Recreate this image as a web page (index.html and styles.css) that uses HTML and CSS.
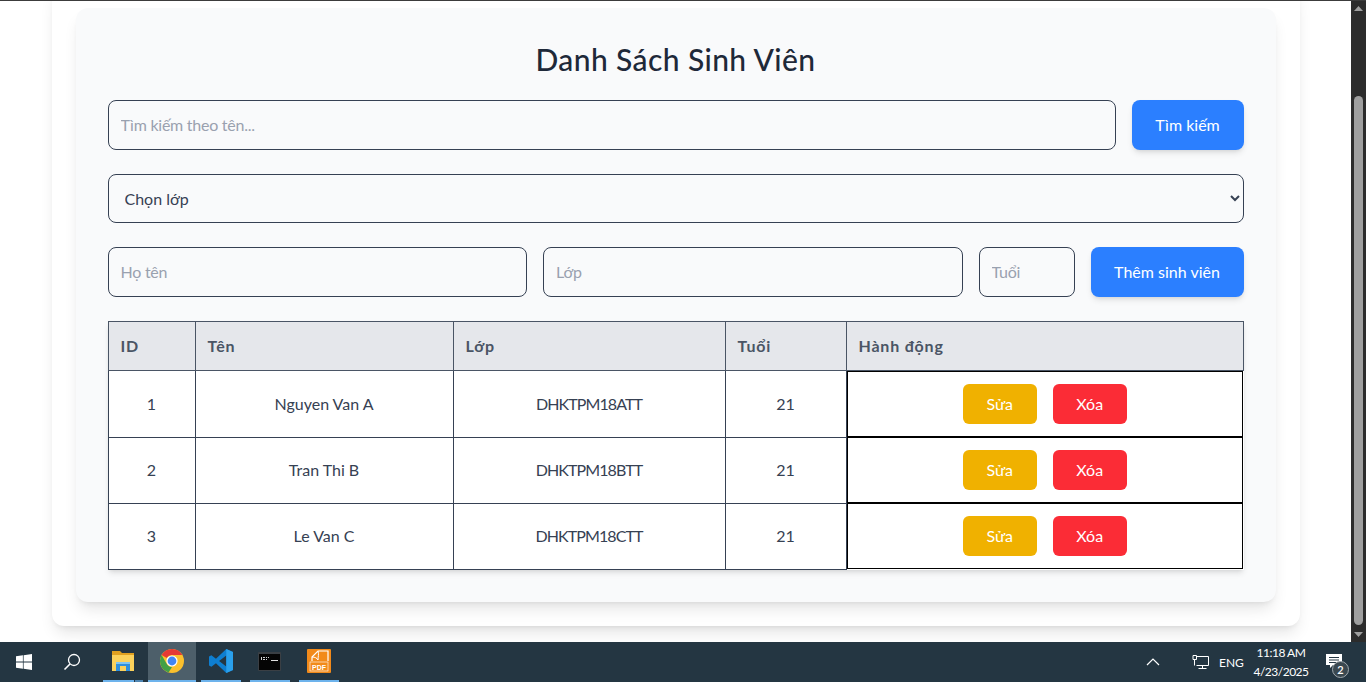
FILE: index.html
```html
<!DOCTYPE html>
<html lang="vi">
<head>
<meta charset="utf-8">
<title>Danh Sách Sinh Viên</title>
<link rel="stylesheet" href="styles.css">
</head>
<body>
<div class="topline"></div>
<div class="screen">
  <main class="viewport">
    <div class="outer">
      <section class="panel">
        <h1 class="title">Danh Sách Sinh Viên</h1>
        <form class="row">
          <input class="field grow" placeholder="Tìm kiếm theo tên...">
          <button type="button" class="primary search">Tìm kiếm</button>
        </form>
        <select class="picker"><option>Chọn lớp</option></select>
        <form class="row">
          <input class="field grow" placeholder="Họ tên">
          <input class="field grow" placeholder="Lớp">
          <input class="field age" placeholder="Tuổi">
          <button type="button" class="primary add">Thêm sinh viên</button>
        </form>
        <table class="students">
          <colgroup><col class="c1"><col class="c2"><col class="c3"><col class="c4"><col class="c5"></colgroup>
          <thead>
            <tr><th>ID</th><th>Tên</th><th>Lớp</th><th>Tuổi</th><th>Hành động</th></tr>
          </thead>
          <tbody>
            <tr><td>1</td><td>Nguyen Van A</td><td class="code">DHKTPM18ATT</td><td>21</td><td class="actions"><button class="act edit">Sửa</button><button class="act del">Xóa</button></td></tr>
            <tr><td>2</td><td>Tran Thi B</td><td class="code">DHKTPM18BTT</td><td>21</td><td class="actions"><button class="act edit">Sửa</button><button class="act del">Xóa</button></td></tr>
            <tr><td>3</td><td>Le Van C</td><td class="code">DHKTPM18CTT</td><td>21</td><td class="actions"><button class="act edit">Sửa</button><button class="act del">Xóa</button></td></tr>
          </tbody>
        </table>
      </section>
    </div>
  </main>
  <aside class="scrollbar">
    <svg class="arrow" width="15" height="17" viewBox="0 0 15 17"><path d="M3 10 L7.500 5 L12 10 Z" fill="#9f9f9f"/></svg>
    <div class="gutter"><div class="thumb"></div></div>
    <svg class="arrow" width="15" height="17" viewBox="0 0 15 17"><path d="M3 7 L12 7 L7.500 12 Z" fill="#9f9f9f"/></svg>
  </aside>
</div>
<footer class="taskbar">
  <div class="sysbtn">
    <svg width="16" height="16" viewBox="0 0 16 16"><path fill="#fff" d="M0 2.300 6.900 1.300V7.600H0ZM7.600 1.200 16 0V7.600H7.600ZM0 8.400H6.900V14.700L0 13.700ZM7.600 8.400H16V16L7.600 14.800Z"/></svg>
  </div>
  <div class="sysbtn">
    <svg width="18" height="18" viewBox="0 0 18 18"><circle cx="11" cy="7" r="5.500" fill="none" stroke="#fff" stroke-width="1.300"/><path d="M7 11 L1.500 16.500" stroke="#fff" stroke-width="1.600" fill="none"/></svg>
  </div>
  <div class="tasks">
    <div class="task">
      <div class="icon">
        <svg width="22" height="20" viewBox="0 0 22 20"><path fill="#e0a020" d="M0 0h8l2 2h12v6H0z"/><path fill="#fbd15b" d="M0 4h22v16H0z"/><path fill="#2f8fdc" d="M4 11h14v9h-4v-5H8v5H4z"/><path fill="#7fc4f2" d="M4 11h14v2H4z"/></svg>
      </div>
      <div class="bar stacked"></div>
    </div>
    <div class="task active">
      <div class="icon">
        <svg width="24" height="24" viewBox="0 0 24 24"><circle cx="12" cy="12" r="12" fill="#fbc02d"/><path fill="#e53935" d="M12 0A12 12 0 0 1 22.400 6H12A6 6 0 0 0 6.800 9L1.600 6A12 12 0 0 1 12 0Z"/><path fill="#43a047" d="M1.600 6 6.800 15A6 6 0 0 0 12 18L8.600 23.500A12 12 0 0 1 1.600 6Z"/><circle cx="12" cy="12" r="5.600" fill="#fff"/><circle cx="12" cy="12" r="4.400" fill="#4285f4"/></svg>
      </div>
      <div class="bar"></div>
    </div>
    <div class="task">
      <div class="icon">
        <svg width="24" height="24" viewBox="0 0 100 100"><path fill="#0e7ed0" d="M72 0 29 41 10 26 0 31V69L10 74 29 59 72 100 100 88V12ZM72 27V73L42 50Z" fill-rule="evenodd"/><path fill="#2aa0ec" d="M72 0 100 12V88L72 100V73 27Z"/></svg>
      </div>
      <div class="bar"></div>
    </div>
    <div class="task">
      <div class="icon">
        <svg width="23" height="19" viewBox="0 0 23 19"><rect width="23" height="19" rx="1" fill="#3a3f44"/><rect x="1" y="2" width="21" height="16" fill="#050505"/><path d="M3 5h1v3H3zM5 5h2v1H5zM5 7h2v1H5zM8 5h1v1H8zM8 7h1v1H8zM10 5h1v1h-1z" fill="#d0d0d0"/><path d="M13 8h7v1h-7z" fill="#e0e0e0"/></svg>
      </div>
      <div class="bar"></div>
    </div>
    <div class="task">
      <div class="icon">
        <svg width="24" height="24" viewBox="0 0 24 24"><rect width="24" height="24" rx="1" fill="#f28a1a"/><path d="M5 12V8L11 2H21V12" fill="none" stroke="#fff" stroke-width="1.200"/><path d="M5 8c3 0 5 1 6 3 0-3 1-6 0-9" fill="none" stroke="#fff" stroke-width="1"/><rect x="3" y="13" width="18" height="9" fill="none" stroke="#fff" stroke-width=".6"/><text x="12" y="21" class="pdf">PDF</text></svg>
      </div>
      <div class="bar"></div>
    </div>
  </div>
  <div class="tray">
    <svg class="chev" width="14" height="8" viewBox="0 0 14 8"><path d="M1 7 7 1 13 7" fill="none" stroke="#fff" stroke-width="1.200"/></svg>
    <svg class="net" width="17" height="14" viewBox="0 0 17 14"><path fill="none" stroke="#fff" d="M4.500 1.500H16.500V10.500H4.500M10.500 10.500V13M6.500 13.500H14.500M1 .5H4.500V4.500H1ZM2.500 4.500V10.500"/></svg>
    <span class="lang">ENG</span>
    <div class="clock"><span>11:18 AM</span><span>4/23/2025</span></div>
    <div class="notify">
      <svg width="16" height="14" viewBox="0 0 16 14"><path fill="#fff" d="M0 0H16V11H7L4 14V11H0Z"/><path stroke="#243642" d="M3 3.500H13M3 6H13M3 8.500H10"/></svg>
      <span class="badge">2</span>
    </div>
  </div>
</footer>
</body>
</html>
```
FILE: styles.css
```css
* { box-sizing: border-box; }
html, body { height: 100%; }
body {
  margin: 0;
  display: flex;
  flex-direction: column;
  overflow: hidden;
  background: #fff;
  color: #364153;
  font-family: Lato, "Noto Sans", sans-serif;
  font-size: 16px;
}
.topline { height: 1px; background: #3c3c3c; flex: none; }
.screen { flex: 1; min-height: 0; display: flex; }
.viewport {
  flex: 1;
  min-width: 0;
  overflow: hidden;
  display: flex;
  flex-direction: column;
  justify-content: flex-end;
  align-items: center;
}
.outer {
  flex: none;
  width: 1248px;
  padding: 24px;
  margin-bottom: 16px;
  background: #fff;
  border-radius: 12px;
  box-shadow: 0 10px 15px -3px rgba(0,0,0,.1), 0 4px 6px -4px rgba(0,0,0,.1);
}
.panel {
  padding: 32px 32px 32.500px;
  background: #f9fafb;
  border-radius: 12px;
  box-shadow: 0 10px 15px -3px rgba(0,0,0,.1), 0 4px 6px -4px rgba(0,0,0,.1);
}
.title {
  margin: 0 0 24px;
  height: 36px;
  font-size: 30px;
  line-height: 38px;
  font-weight: 500;
  letter-spacing: .4px;
  text-align: center;
  color: #1e2939;
}
.row { display: flex; gap: 16px; margin-bottom: 24px; height: 50px; }
.field {
  min-width: 0;
  padding: 12px;
  border: 1px solid #364153;
  border-radius: 8px;
  background: transparent;
  font: inherit;
  color: inherit;
}
.field::placeholder { color: #99a1af; opacity: 1; letter-spacing: -.25px; }
.grow { flex: 1; }
.age { width: 96px; flex: none; }
.primary {
  flex: none;
  padding: 0;
  border: 0;
  border-radius: 8px;
  background: #2b7fff;
  color: #fff;
  font: inherit;
  box-shadow: 0 4px 6px -1px rgba(0,0,0,.1), 0 2px 4px -2px rgba(0,0,0,.1);
}
.search { width: 112px; }
.add { width: 153px; }
.picker {
  display: block;
  width: 100%;
  height: 49px;
  margin-bottom: 24px;
  padding: 12px;
  border: 1px solid #364153;
  border-radius: 8px;
  background: transparent;
  font: inherit;
  color: inherit;
}
.students {
  width: 1135px;
  margin-top: 24.500px;
  table-layout: fixed;
  border-collapse: collapse;
  background: #fff;
  box-shadow: 0 4px 6px -1px rgba(0,0,0,.1), 0 2px 4px -2px rgba(0,0,0,.1);
}
.c1 { width: 87px; }
.c2 { width: 258px; }
.c3 { width: 272px; }
.c4 { width: 121px; }
.c5 { width: 397px; }
th {
  height: 49px;
  padding: 11.500px 12px 12.500px;
  border: 1px solid #4a5565;
  background: #e5e7eb;
  color: #4a5565;
  font-weight: 700;
  text-align: left;
  letter-spacing: .8px;
}
td {
  height: 66px;
  padding: 11.500px 12px 12.500px;
  border: 1px solid #364153;
  text-align: center;
}
td.code { letter-spacing: -.9px; }
td.actions {
  display: flex;
  justify-content: center;
  gap: 16px;
  padding: 12px;
  border: 1px solid #000;
}
.act {
  width: 74px;
  height: 40px;
  padding: 0 0 1px;
  border: 0;
  border-radius: 6px;
  color: #fff;
  font: inherit;
}
.edit { background: #f0b100; }
.del { background: #fb2c36; }
.scrollbar {
  flex: none;
  width: 15px;
  background: #2c2c2c;
  display: flex;
  flex-direction: column;
}
.arrow { display: block; flex: none; }
.gutter { flex: 1; padding: 78px 3px 0; }
.thumb { height: 100%; background: #9f9f9f; border-radius: 5px; }
.taskbar {
  flex: none;
  height: 40px;
  display: flex;
  background: #243642;
  color: #fff;
  font-size: 12px;
}
.sysbtn { width: 48px; display: flex; align-items: center; justify-content: center; }
.tasks { display: flex; margin-left: 2px; }
.task { width: 49px; display: flex; flex-direction: column; align-items: center; }
.task .icon { flex: 1; display: flex; align-items: center; justify-content: center; width: 100%; }
.task svg { display: block; }
.bar { width: 40px; height: 2px; background: #6db3ec; }
.bar.stacked { background: linear-gradient(90deg, #6db3ec 31px, #243642 31px, #243642 32px, #4f86b3 32px); }
.task.active .icon { background: #4d5f6a; }
.task.active .bar { width: 100%; }
.task.active { padding-left: 1px; }
.pdf { font-family: "Liberation Sans", sans-serif; font-size: 7px; font-weight: 700; fill: #fff; text-anchor: middle; }
.tray { margin-left: auto; display: flex; align-items: center; }
.chev { margin-right: 32px; }
.net { margin-right: 10px; }
.lang { width: 24px; margin-right: 12px; font-size: 12px; }
.clock { width: 52px; display: flex; flex-direction: column; align-items: center; line-height: 19px; margin-right: 18px; letter-spacing: -.5px; }
.clock span { white-space: nowrap; }
.notify { width: 41px; height: 40px; padding: 12px 0 0 1px; position: relative; }
.notify svg { display: block; }
.badge {
  position: absolute;
  left: 7px;
  top: 19px;
  width: 17px;
  height: 17px;
  border-radius: 50%;
  border: 1px solid #a0a8ad;
  background: #3a4850;
  font-size: 11px;
  font-weight: 600;
  line-height: 15px;
  text-align: center;
}
```
